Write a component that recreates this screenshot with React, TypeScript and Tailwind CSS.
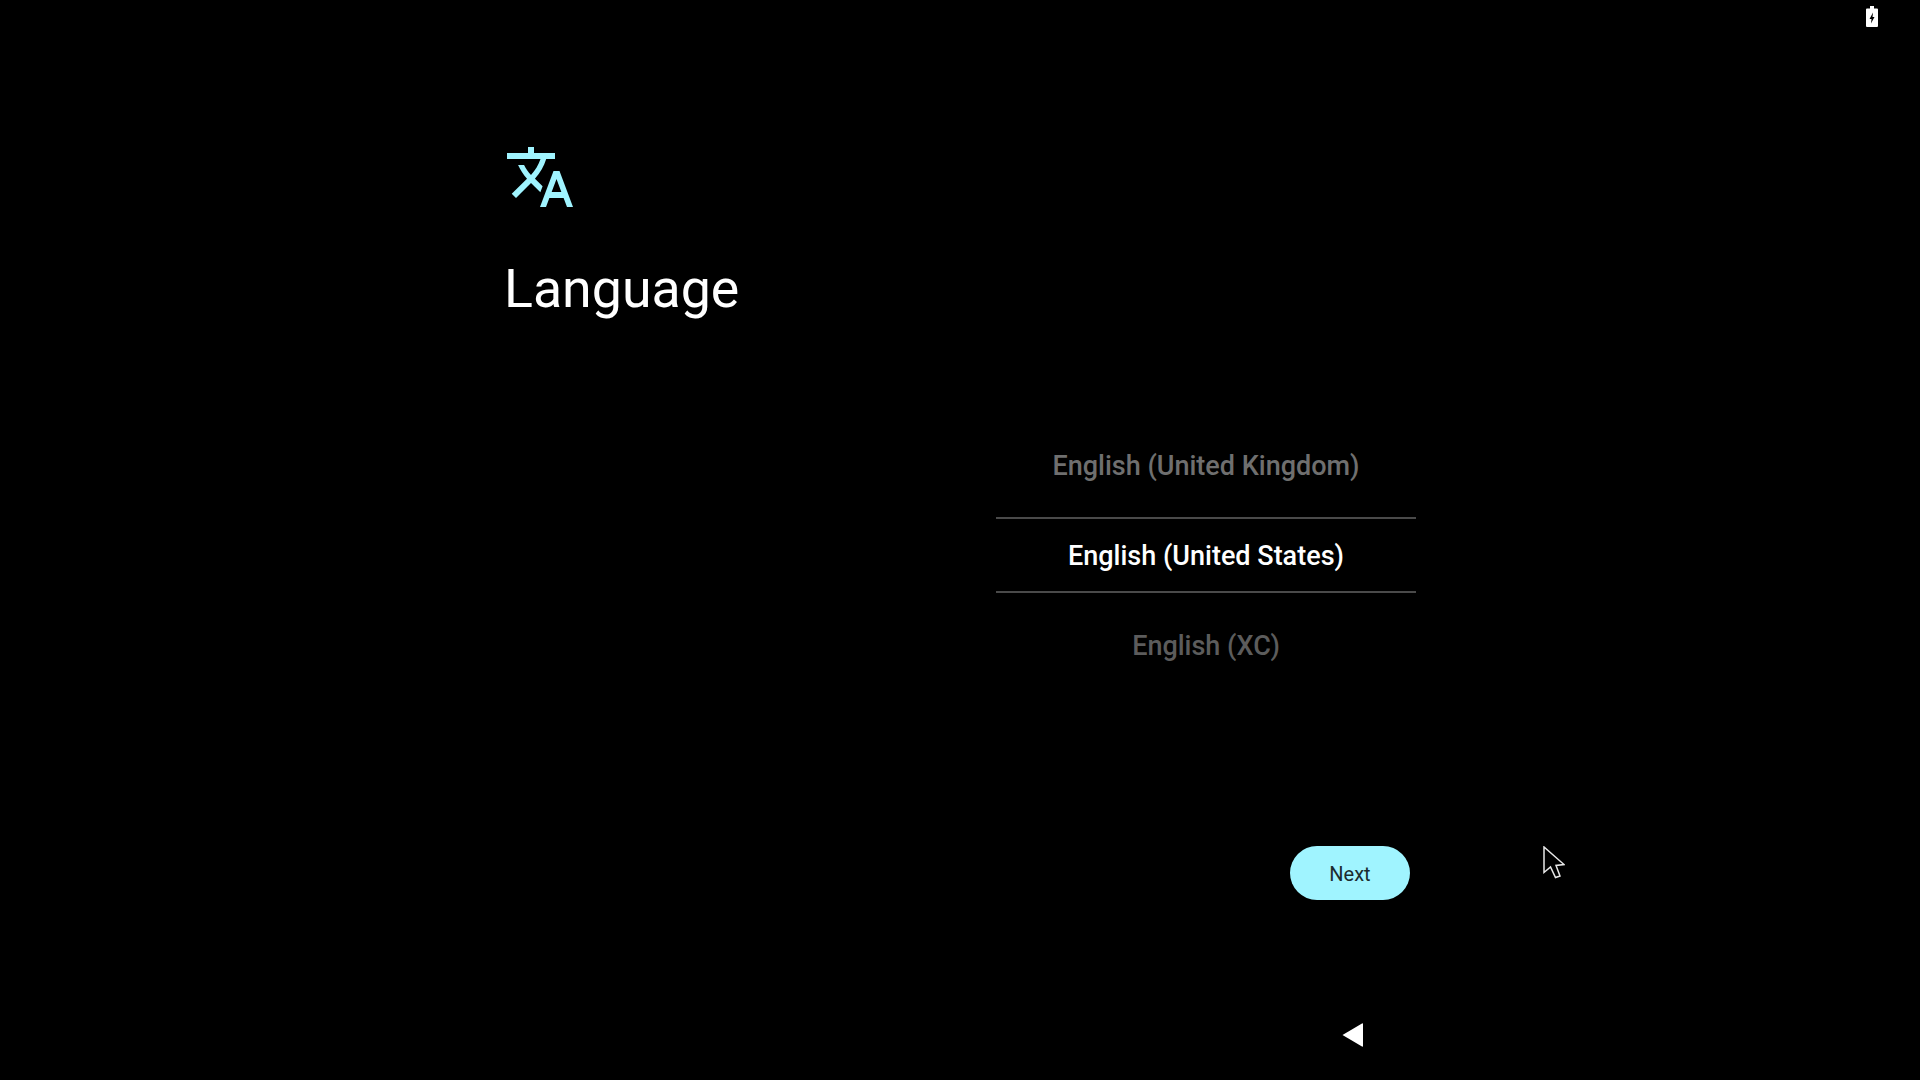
const font = { fontFamily: 'Roboto, sans-serif' }

function TranslateIcon() {
  return (
    <svg width="72" height="72" viewBox="0 0 24 24" fill="#a0f4ff">
      <path d="M12.87 15.07l-2.54-2.51.03-.03c1.74-1.94 2.98-4.17 3.71-6.53H17V4h-7V2H8v2H1v1.99h11.17C11.5 7.92 10.44 9.75 9 11.35 8.07 10.32 7.3 9.19 6.69 8h-2c.73 1.63 1.73 3.17 2.98 4.56l-5.09 5.02L4 19l5-5 3.11 3.11.76-2.04zM18.5 10h-2L12 22h2l1.12-3h4.75L21 22h2l-4.5-12zm-2.62 7l1.62-4.33L19.12 17h-3.24z" />
    </svg>
  )
}

function BatteryIcon() {
  return (
    <svg width="12" height="21" viewBox="0 0 12 21">
      <path
        fillRule="evenodd"
        fill="#fff"
        d="M4 0h4v2.5h3a1 1 0 0 1 1 1v16.5a1 1 0 0 1-1 1h-10a1 1 0 0 1-1-1v-16.5a1 1 0 0 1 1-1h3zM7 6.5l-3.5 6.5h2l-.5 4.5 3.5-6.5h-2z"
      />
    </svg>
  )
}

function Cursor() {
  return (
    <svg className="absolute left-[1543px] top-[846px]" width="22" height="33" viewBox="0 0 22 33">
      <path
        d="M1 1V26.5L7.5 21L12.5 31.5L17 30L13 19.5L21 18.5Z"
        fill="#000"
        stroke="#e8e8e8"
        strokeWidth="1.5"
      />
    </svg>
  )
}

export default function App() {
  return (
    <div className="relative flex h-[1080px] w-[1920px] flex-col overflow-hidden bg-black text-white" style={font}>
      <div className="flex h-[141px] justify-end pr-[42px] pt-[6px]">
        <BatteryIcon />
      </div>

      <div className="flex h-[759px] pl-[504px]">
        <div className="w-[492px]">
          <TranslateIcon />
          <h1 className="mt-[43px] text-[53.7px] leading-[66px] font-normal">Language</h1>
        </div>

        <div className="flex w-[420px] flex-col">
          <div className="mt-[309px] h-[67px] text-center text-[27px] leading-[32px] font-medium text-[#6f6f6f]">
            English (United Kingdom)
          </div>
          <div className="flex h-[76px] items-center justify-center border-y-2 border-[#4a4a4a] pt-[2px] text-[27px] font-medium">
            English (United States)
          </div>
          <div className="mt-[37px] text-center text-[27px] leading-[32px] font-medium text-[#5c5c5c]">
            English (XC)
          </div>
          <button className="mr-[6px] mt-auto flex h-[54px] w-[120px] items-center justify-center self-end rounded-full bg-[#a0f4ff] pt-[1px] text-[20px] font-normal text-[#1c2b2e]">
            Next
          </button>
        </div>
      </div>

      <div className="flex flex-1 pl-[1342px] pt-[123px]">
        <svg width="22" height="24" viewBox="0 0 22 24">
          <path d="M0.5 12L20 .4Q21 0 21 1V23Q21 24 20 23.6Z" fill="#fff" />
        </svg>
      </div>

      <Cursor />
    </div>
  )
}
